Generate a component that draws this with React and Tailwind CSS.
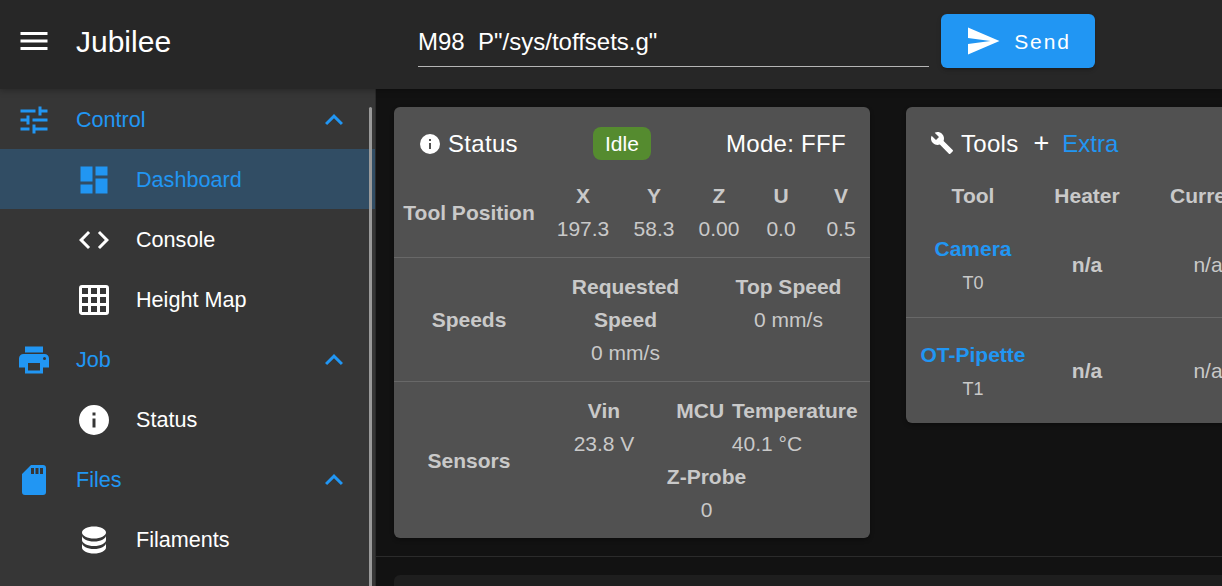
import React from "react";

const P = {
  menu: "M3,6H21V8H3V6M3,11H21V13H3V11M3,16H21V18H3V16Z",
  tune: "M3,17V19H9V17H3M3,5V7H13V5H3M13,21V19H21V17H13V15H11V21H13M7,9V11H3V13H7V15H9V9H7M21,13V11H11V13H21M15,9H17V7H21V5H17V3H15V9Z",
  dash: "M13,3V9H21V3M13,21H21V11H13M3,21H11V15H3M3,13H11V3H3V13Z",
  code: "M14.6,16.6L19.2,12L14.6,7.4L16,6L22,12L16,18L14.6,16.6M9.4,16.6L4.8,12L9.4,7.4L8,6L2,12L8,18L9.4,16.6Z",
  grid: "M10,4V8H14V4H10M16,4V8H20V4H16M16,10V14H20V10H16M16,16V20H20V16H16M14,20V16H10V20H14M8,20V16H4V20H8M8,14V10H4V14H8M8,8V4H4V8H8M10,14H14V10H10V14M4,2H20A2,2 0 0,1 22,4V20A2,2 0 0,1 20,22H4C2.92,22 2,21.1 2,20V4A2,2 0 0,1 4,2Z",
  printer: "M18,3H6V7H18M19,12A1,1 0 0,1 18,11A1,1 0 0,1 19,10A1,1 0 0,1 20,11A1,1 0 0,1 19,12M16,19H8V14H16M19,8H5A3,3 0 0,0 2,11V17H6V21H18V17H22V11A3,3 0 0,0 19,8Z",
  info: "M13,9H11V7H13M13,17H11V11H13M12,2A10,10 0 0,0 2,12A10,10 0 0,0 12,22A10,10 0 0,0 22,12A10,10 0 0,0 12,2Z",
  sd: "M18,8H16V4H18M15,8H13V4H15M12,8H10V4H12M18,2H10L4,8V20A2,2 0 0,0 6,22H18A2,2 0 0,0 20,20V4A2,2 0 0,0 18,2Z",
  db: "M12,3C7.58,3 4,4.79 4,7C4,9.21 7.58,11 12,11C16.42,11 20,9.21 20,7C20,4.79 16.42,3 12,3M4,9V12C4,14.21 7.58,16 12,16C16.42,16 20,14.21 20,12V9C20,11.21 16.42,13 12,13C7.58,13 4,11.21 4,9M4,14V17C4,19.21 7.58,21 12,21C16.42,21 20,19.21 20,17V14C20,16.21 16.42,18 12,18C7.58,18 4,16.21 4,14Z",
  wrench: "M22.7,19L13.6,9.9C14.5,7.6 14,4.9 12.1,3C10.1,1 7.1,0.6 4.7,1.7L9,6L6,9L1.6,4.7C0.4,7.1 0.9,10.1 2.9,12.1C4.8,14 7.5,14.5 9.8,13.6L18.9,22.7C19.3,23.1 19.9,23.1 20.3,22.7L22.6,20.4C23.1,20 23.1,19.3 22.7,19Z",
  send: "M2,21L23,12L2,3V10L17,12L2,14V21Z",
  up: "M7.41,15.41L12,10.83L16.59,15.41L18,14L12,8L6,14L7.41,15.41Z",
};

function Icon({ d, className }) {
  return (
    <svg viewBox="0 0 24 24" fill="currentColor" className={className}>
      <path d={d} />
    </svg>
  );
}

function Group({ icon, label }) {
  return (
    <div className="flex h-[60px] items-center pt-[2px] text-[#2196f3]">
      <div className="flex w-[76px] pl-[16px]">
        <Icon d={icon} className="h-[36px] w-[36px]" />
      </div>
      <span className="flex-1 text-[21.6px]">{label}</span>
      <Icon d={P.up} className="mr-[23px] h-[36px] w-[36px]" />
    </div>
  );
}

function Item({ icon, label, active }) {
  return (
    <div className={`flex h-[60px] items-center pl-[76px] pt-[2px] ${active ? "bg-[#314d64] text-[#2196f3]" : "text-white"}`}>
      <div className="flex w-[60px]">
        <Icon d={icon} className="h-[36px] w-[36px]" />
      </div>
      <span className="text-[21.6px]">{label}</span>
    </div>
  );
}

function Cell({ head, value, className }) {
  return (
    <div className={`text-center ${className}`}>
      <div className="font-bold">{head}</div>
      <div>{value}</div>
    </div>
  );
}

function Row({ label, children, className }) {
  return (
    <div className={`flex items-center ${className}`}>
      <div className="w-[150px] shrink-0 text-center font-bold">{label}</div>
      <div className="flex-1">{children}</div>
    </div>
  );
}

function ToolRow({ name, sub, border, last }) {
  return (
    <div className={`flex items-center ${last ? "h-[105px]" : "h-[106px]"} ${border ? "border-b border-[#686868]" : ""}`}>
      <div className="w-[134px] text-center">
        <div className="pt-[2px] font-bold text-[#2196f3]">{name}</div>
        <div className="pt-[2px] text-[18px] leading-[33px]">{sub}</div>
      </div>
      <div className="w-[94px] text-center font-bold">n/a</div>
      <div className="w-[148px] text-center">n/a</div>
    </div>
  );
}

export default function App() {
  return (
    <div className="flex h-[586px] w-[1222px] flex-col overflow-hidden bg-[#121212] font-['Liberation_Sans',Arial,sans-serif]">
      <header className="relative z-10 flex h-[89px] shrink-0 items-center bg-[#272727] shadow-[0_2px_6px_rgba(0,0,0,0.25)]">
        <div className="flex w-[418px] items-center pb-[7px] pl-[16px] text-white">
          <Icon d={P.menu} className="h-[36px] w-[36px]" />
          <span className="ml-[24px] text-[30px]">Jubilee</span>
        </div>
        <div className="mt-[14px] flex h-[53px] w-[511px] items-center self-start whitespace-pre border-b border-[#b5b5b5] pt-[3px] text-[24px] text-white">
          {'M98  P"/sys/toffsets.g"'}
        </div>
        <button className="ml-[12px] mt-[14px] flex h-[54px] w-[154px] items-center justify-center gap-[13px] self-start rounded-[6px] bg-[#2196f3] text-[21px] tracking-[1.9px] text-white shadow-[0_3px_3px_-2px_rgba(0,0,0,0.2),0_2px_5px_rgba(0,0,0,0.14)]">
          <Icon d={P.send} className="h-[36px] w-[36px]" />
          <span className="pt-[2px]">Send</span>
        </button>
      </header>

      <div className="flex min-h-0 flex-1">
        <nav className="relative w-[376px] shrink-0 overflow-hidden border-r border-[#2a2a2a] bg-[#363636]">
          <Group icon={P.tune} label="Control" />
          <Item icon={P.dash} label="Dashboard" active />
          <Item icon={P.code} label="Console" />
          <Item icon={P.grid} label="Height Map" />
          <Group icon={P.printer} label="Job" />
          <Item icon={P.info} label="Status" />
          <Group icon={P.sd} label="Files" />
          <Item icon={P.db} label="Filaments" />
          <div className="absolute bottom-0 right-[3px] top-[18px] w-[3px] rounded-t bg-[#9a9a9a]" />
        </nav>

        <main className="min-w-0 flex-1 overflow-hidden pt-[18px]">
          <div className="flex items-start gap-[36px] px-[18px]">
            <section className="h-[431px] w-[476px] shrink-0 rounded-[6px] bg-[#515151] text-[21px] leading-[33px] text-[#c9c9c9] shadow-[0_2px_4px_rgba(0,0,0,0.3)]">
              <div className="flex h-[73px] items-center justify-between px-[24px] text-[24px] tracking-[0.3px] text-white">
                <div className="flex items-center gap-[6px]">
                  <Icon d={P.info} className="h-[24px] w-[24px]" />
                  Status
                </div>
                <span className="flex h-[33px] w-[58px] items-center justify-center rounded-[8px] bg-[#558b2f] text-[21px] tracking-normal">Idle</span>
                <span>Mode: FFF</span>
              </div>
              <Row label="Tool Position" className="h-[78px] border-b border-[#686868] pb-[12px]">
                <div className="flex pb-[2px] pl-[1px]">
                  <Cell head="X" value="197.3" className="w-[76px]" />
                  <Cell head="Y" value="58.3" className="w-[66px]" />
                  <Cell head="Z" value="0.00" className="w-[64px]" />
                  <Cell head="U" value="0.0" className="w-[60px]" />
                  <Cell head="V" value="0.5" className="w-[60px]" />
                </div>
              </Row>
              <Row label="Speeds" className="h-[124px] border-b border-[#686868]">
                <div className="flex">
                  <Cell head={<>Requested<br />Speed</>} value="0 mm/s" className="w-[163px]" />
                  <div className="w-[163px] self-start text-center">
                    <div className="font-bold">Top Speed</div>
                    <div>0 mm/s</div>
                  </div>
                </div>
              </Row>
              <Row label="Sensors" className="h-[156px]">
                <div className="flex pl-[1px]">
                  <Cell head="Vin" value="23.8 V" className="w-[118px]" />
                  <Cell head={<span className="[word-spacing:2px]">MCU Temperature</span>} value="40.1 °C" className="w-[208px]" />
                </div>
                <Cell head="Z-Probe" value="0" className="pr-[2px]" />
              </Row>
            </section>

            <section className="h-[316px] w-[520px] shrink-0 overflow-hidden rounded-[6px] bg-[#515151] text-[21px] leading-[33px] text-[#c9c9c9] shadow-[0_2px_4px_rgba(0,0,0,0.3)]">
              <div className="flex h-[72px] items-center px-[24px] text-[24px] tracking-[0.3px] text-white">
                <Icon d={P.wrench} className="mr-[7px] h-[24px] w-[24px]" />
                Tools
                <span className="ml-[15px] text-[27px] tracking-normal">+</span>
                <span className="ml-[13px] tracking-normal text-[#2196f3]">Extra</span>
              </div>
              <div className="flex h-[33px] font-bold">
                <div className="w-[134px] text-center">Tool</div>
                <div className="w-[94px] text-center">Heater</div>
                <div className="ml-[36px] whitespace-nowrap">Current</div>
              </div>
              <ToolRow name="Camera" sub="T0" border />
              <ToolRow name="OT-Pipette" sub="T1" last />
            </section>
          </div>
          <div className="mt-[18px] border-t border-[#2b2b2b]" />
          <div className="mx-[18px] mt-[18px] h-[40px] w-[1000px] rounded-[6px] bg-[#1e1e1e]" />
        </main>
      </div>
    </div>
  );
}
